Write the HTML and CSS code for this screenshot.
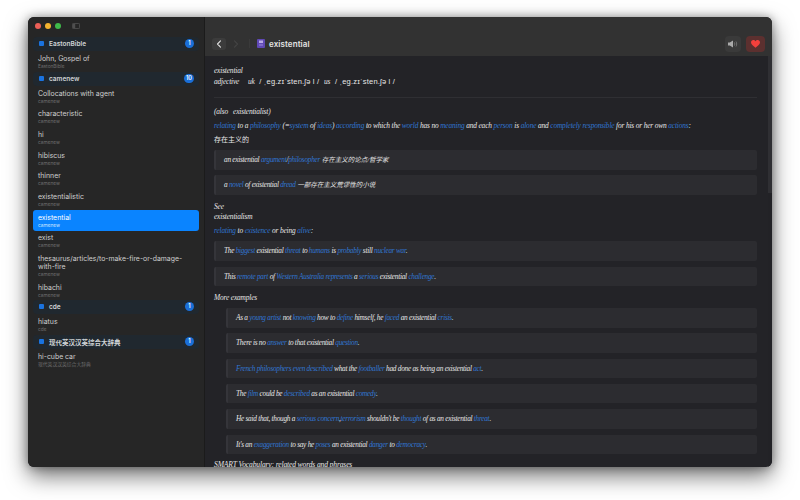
FILE: index.html
```html
<!DOCTYPE html>
<html lang="en">
<head>
<meta charset="utf-8">
<title>existential</title>
<link rel="stylesheet" href="styles.css">
</head>
<body>
<div class="window">
  <aside class="sidebar">
    <div class="titlebar">
      <span class="light red"></span><span class="light yellow"></span><span class="light green"></span>
      <svg class="side-toggle" width="8" height="6" viewBox="0 0 8 6"><rect x=".4" y=".4" width="7.200" height="5.200" rx="1" fill="none" stroke="#5c5c5c" stroke-width=".7"/><rect x=".8" y=".8" width="2.400" height="4.400" fill="#4f4f4f"/></svg>
    </div>
    <div class="group"><span class="book"></span><span class="group-name">EastonBible</span><span class="badge">1</span></div>
    <div class="item"><div class="title">John, Gospel of</div><div class="sub">EastonBible</div></div>
    <div class="group"><span class="book"></span><span class="group-name">camenew</span><span class="badge">10</span></div>
    <div class="item"><div class="title">Collocations with agent</div><div class="sub">camenew</div></div>
    <div class="item"><div class="title">characteristic</div><div class="sub">camenew</div></div>
    <div class="item"><div class="title">hi</div><div class="sub">camenew</div></div>
    <div class="item"><div class="title">hibiscus</div><div class="sub">camenew</div></div>
    <div class="item"><div class="title">thinner</div><div class="sub">camenew</div></div>
    <div class="item"><div class="title">existentialistic</div><div class="sub">camenew</div></div>
    <div class="item selected"><div class="title">existential</div><div class="sub">camenew</div></div>
    <div class="item"><div class="title">exist</div><div class="sub">camenew</div></div>
    <div class="item"><div class="title">thesaurus/articles/to-make-fire-or-damage-with-fire</div><div class="sub">camenew</div></div>
    <div class="item short"><div class="title">hibachi</div><div class="sub">camenew</div></div>
    <div class="group"><span class="book"></span><span class="group-name">cde</span><span class="badge">1</span></div>
    <div class="item"><div class="title">hiatus</div><div class="sub">cde</div></div>
    <div class="group"><span class="book"></span><span class="group-name">现代英汉汉英综合大辞典</span><span class="badge">1</span></div>
    <div class="item"><div class="title">hi-cube car</div><div class="sub">现代英汉汉英综合大辞典</div></div>
  </aside>
  <main class="main">
    <header class="toolbar">
      <button class="nav-btn"><svg width="6" height="8" viewBox="0 0 6 8"><path d="M4.500 .8 1.500 4l3 3.200" fill="none" stroke="#ddd" stroke-width="1.100" stroke-linecap="round" stroke-linejoin="round"/></svg></button>
      <span class="nav-fwd"><svg width="6" height="8" viewBox="0 0 6 8"><path d="M1.500 .8 4.500 4l-3 3.200" fill="none" stroke="#444" stroke-width="1.100" stroke-linecap="round" stroke-linejoin="round"/></svg></span>
      <span class="divider"></span>
      <svg class="dict-icon" width="8" height="9" viewBox="0 0 8 9"><rect width="8" height="9" rx="1" fill="#5f48b5"/><rect x="2" y="1.500" width="4" height="2.500" fill="#b9aae8"/><rect x="2" y="5.500" width="4" height="1" fill="#9c8ae0"/></svg>
      <span class="word-title">existential</span>
      <button class="tool-btn"><svg width="10" height="8" viewBox="0 0 10 8"><path d="M0 2.600h1.800L5 .6v6.800L1.800 5.400H0z" fill="#aaa"/><path d="M6.400 2.400c.5.9.5 2.300 0 3.200M8 1.500c.9 1.500.9 3.500 0 5" fill="none" stroke="#888" stroke-width=".7"/></svg></button>
      <button class="fav-btn"><svg width="9" height="8" viewBox="0 0 9 8"><path d="M4.500 7.800C2 5.800 0 4.200 0 2.300 0 1 1 0 2.300 0c.9 0 1.700.5 2.200 1.200C5 .5 5.800 0 6.700 0 8 0 9 1 9 2.300c0 1.900-2 3.500-4.500 5.500z" fill="#f4403c"/></svg></button>
    </header>
    <div class="scroll-area">
      <article class="entry">
        <p class="line">existential</p>
        <p class="line pron">adjective <span class="region">uk</span> <span class="ipa">/ ˌeɡ.zɪˈsten.ʃə l /</span> <span class="region-us">us</span> <span class="ipa">/ ˌeɡ.zɪˈsten.ʃə l /</span></p>
        <hr class="rule">
        <p class="line also">(also&nbsp;&nbsp; existentialist)</p>
        <p class="line def"><a>relating</a> to a <a>philosophy</a> (=<a>system</a> of <a>ideas</a>) <a>according</a> to which the <a>world</a> has no <a>meaning</a> and each <a>person</a> is <a>alone</a> and <a>completely responsible</a> for his or her own <a>actions</a>:</p>
        <p class="line zh">存在主义的</p>
        <div class="examples first">
          <div class="box"><span>an existential <a>argument</a>/<a>philosopher</a> <span class="cn">存在主义的论点/哲学家</span></span></div>
          <div class="box"><span>a <a>novel</a> of existential <a>dread</a> <span class="cn">一部存在主义荒谬性的小说</span></span></div>
        </div>
        <p class="line see">See</p>
        <p class="line">existentialism</p>
        <p class="line def2"><a>relating</a> to <a>existence</a> or being <a>alive</a>:</p>
        <div class="examples second">
          <div class="box"><span>The <a>biggest</a> existential <a>threat</a> to <a>humans</a> is <a>probably</a> still <a>nuclear war</a>.</span></div>
          <div class="box"><span>This <a>remote part</a> of <a>Western Australia represents</a> a <a>serious</a> existential <a>challenge</a>.</span></div>
        </div>
        <p class="line more">More examples</p>
        <div class="examples nested">
          <div class="box"><span>As a <a>young artist</a> not <a>knowing</a> how to <a>define</a> himself, he <a>faced</a> an existential <a>crisis</a>.</span></div>
          <div class="box"><span>There is no <a>answer</a> to that existential <a>question</a>.</span></div>
          <div class="box"><span><a>French philosophers even described</a> what the <a>footballer</a> had done as being an existential <a>act</a>.</span></div>
          <div class="box"><span>The <a>film</a> could be <a>described</a> as an existential <a>comedy</a>.</span></div>
          <div class="box"><span>He said that, though a <a>serious concern</a>,<a>terrorism</a> shouldn't be <a>thought</a> of as an existential <a>threat</a>.</span></div>
          <div class="box"><span>It's an <a>exaggeration</a> to say he <a>poses</a> an existential <a>danger</a> to <a>democracy</a>.</span></div>
        </div>
        <p class="line smart">SMART Vocabulary: related words and phrases</p>
      </article>
      <div class="scrollbar"><div class="thumb"></div></div>
    </div>
  </main>
</div>
</body>
</html>
```
FILE: styles.css
```css
* { box-sizing: border-box; }
html, body { height: 100%; }
body {
  margin: 0;
  padding: 17px 28px 33px;
  background: #fff;
  overflow: hidden;
  font-family: "Inter", "Liberation Sans", "Noto Sans CJK SC", sans-serif;
}
p { margin: 0; }
button { border: 0; padding: 0; font: inherit; }

.window {
  display: flex;
  width: 744px;
  height: 450px;
  border-radius: 6px;
  overflow: hidden;
  background: #232327;
  box-shadow: 0 9px 22px rgba(0, 0, 0, .55), 0 0 10px rgba(0, 0, 0, .35);
}

/* sidebar */
.sidebar {
  flex: 0 0 177px;
  padding: 0 5px;
  background: #262626;
  border-right: 1px solid #1b1b1b;
  color: #d4d4d4;
}
.titlebar {
  display: flex;
  align-items: center;
  gap: 4px;
  height: 19.500px;
  padding: 3px 0 4px 2px;
}
.light { width: 6px; height: 6px; border-radius: 50%; }
.red { background: #ec5f57; }
.yellow { background: #f4b32f; }
.green { background: #3fb94a; }
.side-toggle { margin-left: 7px; }

.group {
  display: flex;
  align-items: center;
  height: 14.500px;
  padding: 0 5px;
  border-radius: 4px;
  background: #20282f;
  font-size: 6.500px;
  font-weight: 600;
  color: #cfd3d6;
}
.book {
  width: 5px;
  height: 5px;
  margin-left: 1px;
  margin-right: 5px;
  border-radius: 1px;
  background: #1a73e0;
}
.group-name { flex: 1; }
.badge {
  min-width: 9px;
  height: 9px;
  padding: 0 2px;
  border-radius: 5px;
  background: #1a6fd8;
  color: #fff;
  font-size: 5.500px;
  line-height: 9px;
  text-align: center;
}

.item {
  padding: 3.500px 5px 2.170px;
  border-radius: 3px;
}
.item.short { padding-bottom: 1px; }
.title { font-size: 6.900px; line-height: 8px; color: #cfcfcf; }
.sub { font-size: 4.800px; line-height: 7px; color: #6f6f6f; }
.selected { background: #0a84ff; }
.selected .title { color: #fff; }
.selected .sub { color: #cfe6ff; }

/* main */
.main {
  flex: 1;
  display: flex;
  flex-direction: column;
  min-width: 0;
}
.toolbar {
  flex: 0 0 39px;
  display: flex;
  align-items: center;
  padding: 14px 7px 0 7px;
  background: #323232;
}
.nav-btn {
  display: flex;
  align-items: center;
  justify-content: center;
  width: 14px;
  height: 12px;
  border-radius: 3px;
  background: #3c3c3c;
}
.nav-fwd { display: flex; margin-left: 7px; }
.divider { width: 1px; height: 9px; margin: 0 7px 0 10px; background: #3a3a3a; }
.dict-icon { flex: none; }
.word-title {
  flex: 1;
  margin-left: 4px;
  font-size: 8px;
  font-weight: 600;
  letter-spacing: .1px;
  color: #e4e4e4;
}
.tool-btn, .fav-btn {
  display: flex;
  align-items: center;
  justify-content: center;
  height: 16px;
  border-radius: 4px;
}
.tool-btn { width: 16px; background: #3a3a3a; }
.fav-btn { width: 19px; margin-left: 5px; background: #5c302f; }

.scroll-area {
  flex: 1;
  display: flex;
  min-height: 0;
  overflow: hidden;
}
.entry {
  flex: 1;
  min-width: 0;
  padding: 10px 11px 0 9px;
  font-family: "Liberation Serif", "Noto Sans CJK SC", serif;
  font-style: italic;
  font-size: 7.400px;
  letter-spacing: -.16px;
  color: #e6e6e6;
}
.entry a { color: #3176d0; }
.line { line-height: 10px; white-space: nowrap; }
.pron { line-height: 11px; }
.region { margin-left: 7px; margin-right: 3px; }
.region-us { margin-left: 3px; margin-right: 3px; }
.ipa { font-family: "Liberation Sans", sans-serif; font-style: normal; font-size: 7.500px; letter-spacing: .2px; }
.rule { height: 1px; margin: 10px 0 0; border: 0; background: #2f2f33; }
.also { margin-top: 8.500px; }
.def { margin-top: 3px; line-height: 11px; }
.zh { margin-top: 3.500px; font-style: normal; font-family: "Noto Sans CJK SC", sans-serif; font-size: 7px; letter-spacing: 0; }
.examples { display: flex; flex-direction: column; gap: 5.800px; }
.first { margin-top: 6px; }
.see { margin-top: 7.500px; }
.def2 { margin-top: 4px; }
.second { margin-top: 5px; }
.more { margin-top: 7px; }
.nested { margin-top: 5px; padding-left: 12px; }
.smart { margin-top: 6px; font-size: 7.600px; letter-spacing: -.15px; }
.box {
  height: 19.500px;
  padding-left: 8px;
  border-left: 2px solid #35353a;
  border-radius: 2px;
  background: #2c2c30;
  line-height: 19.500px;
  font-size: 7.300px;
  letter-spacing: -.27px;
  white-space: nowrap;
}
.cn { font-size: 6.500px; letter-spacing: 0; }

.scrollbar { flex: 0 0 4px; background: #222226; }
.thumb { height: 137px; background: #2f2f33; }
```
